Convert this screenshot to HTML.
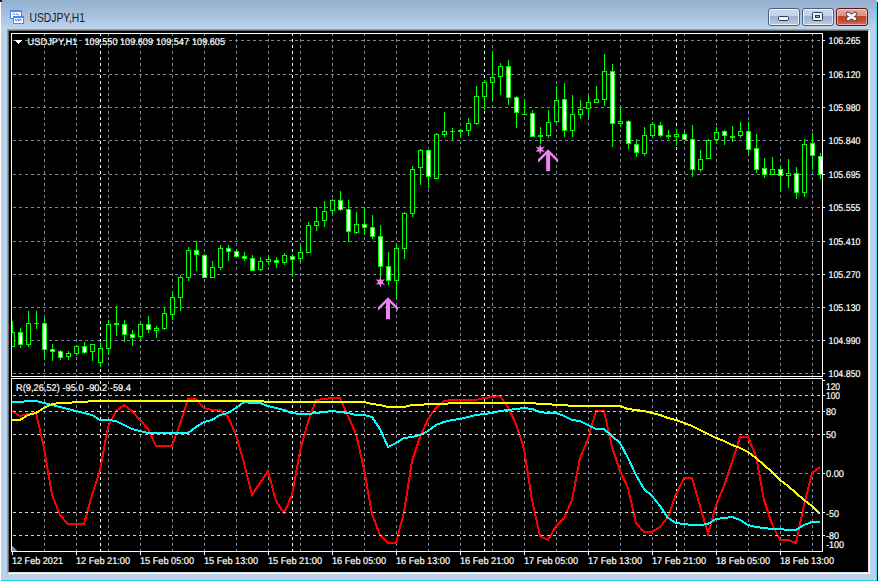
<!DOCTYPE html>
<html><head><meta charset="utf-8"><title>USDJPY,H1</title>
<style>
html,body{margin:0;padding:0;}
body{width:880px;height:581px;overflow:hidden;position:relative;background:#ffffff;font-family:"Liberation Sans", sans-serif;}
.win{position:absolute;left:0;top:0;width:880px;height:581px;}
.frame{position:absolute;left:1px;top:0;width:876px;height:581px;background:#bcd2ea;border-radius:0 2px 0 0;}
.title{position:absolute;left:1px;top:0;width:876px;height:29px;border-radius:0 2px 0 0;
  background:linear-gradient(to bottom,#95afcf 0%,#a4bedc 45%,#bdd4ec 100%);}
.edgeR{position:absolute;left:876px;top:2px;width:1px;height:579px;background:#4fd3fb;}
.edgeR2{position:absolute;left:877px;top:2px;width:1px;height:579px;background:#1c1010;}
.edgeB{position:absolute;left:1px;top:580px;width:876px;height:1px;background:#2cd0ec;}
.edgeL{position:absolute;left:0;top:2px;width:1px;height:579px;background:#ffffff;}
.tl{position:absolute;left:0;top:0;width:2px;height:2px;background:#202020;}
.ttext{position:absolute;left:0;top:0;}
.btn{position:absolute;top:8px;height:16px;width:30px;border:1px solid #4d5e78;border-radius:3px;
  box-shadow:inset 0 0 0 1px rgba(255,255,255,0.75);
  background:linear-gradient(to bottom,#c8d9ec 0%,#bfd2e8 42%,#9cb4d0 47%,#a8bfdb 75%,#bcd1ea 100%);}
.btn.close{border-color:#5a1820;box-shadow:inset 0 0 0 1px rgba(255,220,210,0.6);
  background:linear-gradient(to bottom,#eaa99b 0%,#de9080 42%,#c0432a 47%,#c44c35 75%,#d67060 100%);}
.chart{position:absolute;left:7px;top:29px;width:863px;height:545px;box-sizing:border-box;
  border-style:solid;border-width:1px;border-color:#a0a0a0 #ffffff #ffffff #a0a0a0;}
.chart2{position:absolute;left:0;top:0;right:0;bottom:0;border-style:solid;border-width:1px;
  border-color:#696969 #e3e3e3 #e3e3e3 #696969;background:#000;}
svg{position:absolute;left:0;top:0;}
</style></head>
<body>
<div class="win">
  <div class="frame"></div>
  <div class="title"></div>
  <div class="edgeL"></div>
  <div class="tl"></div>
  <div class="edgeR"></div>
  <div class="edgeR2"></div>
  <div class="edgeB"></div>
  <div class="btn" style="left:768px;"></div>
  <div class="btn" style="left:802px;"></div>
  <div class="btn close" style="left:836px;"></div>
  <div class="chart"><div class="chart2"></div></div>
</div>
<svg width="880" height="581" viewBox="0 0 880 581" shape-rendering="crispEdges">
<defs>
<clipPath id="mainclip"><rect x="12" y="34" width="810" height="342"/></clipPath>
<clipPath id="indclip"><rect x="12" y="379" width="810" height="172"/></clipPath>
</defs>
<!-- title icon -->
<g shape-rendering="auto">
<rect x="10.5" y="10.5" width="11" height="8" fill="#ffffff" stroke="#4a88f4" stroke-width="1"/>
<rect x="10" y="10" width="12" height="2" fill="#4a88f4"/>
<path d="M12.5,14.5 l1.2,-1.2 l1.2,1.5 M15.8,12.8 l1.2,1.5 l1.8,0.8" fill="none" stroke="#3d7de8" stroke-width="1"/>
<rect x="13.5" y="16.5" width="10" height="7" fill="#ffffff" stroke="#4a88f4" stroke-width="1"/>
<rect x="13" y="16" width="11" height="2" fill="#4a88f4"/>
<path d="M15,18.8 l1.4,2.3 l1.3,-2.3 l1.3,2.3 l1.3,-2.3 l1.4,2.3" fill="none" stroke="#3d7de8" stroke-width="1"/>
</g>
<text x="29.5" y="22" font-family='"Liberation Sans", sans-serif' font-size="12px" fill="#1a1a2a" textLength="55.5" lengthAdjust="spacingAndGlyphs" shape-rendering="auto">USDJPY,H1</text>
<!-- window button glyphs -->
<g shape-rendering="auto">
<rect x="778.5" y="16.5" width="10" height="4" rx="1.2" fill="#f2f2f2" stroke="#333a4a" stroke-width="1"/>
<rect x="812.5" y="12.5" width="10" height="8" rx="1" fill="#f2f2f2" stroke="#333a4a" stroke-width="1"/>
<rect x="815.5" y="15.5" width="4" height="2" fill="#8aa6c8" stroke="#333a4a" stroke-width="1"/>
<path d="M848,14 L855,19 M855,14 L848,19" stroke="#3a3440" stroke-width="4.6" stroke-linecap="round"/>
<path d="M848,14 L855,19 M855,14 L848,19" stroke="#f6f6f6" stroke-width="2.8" stroke-linecap="round"/>
</g>
<g stroke="#778899" stroke-width="1" stroke-dasharray="3 3"><line x1="12" y1="40.5" x2="822" y2="40.5" stroke-dashoffset="5"/><line x1="12" y1="74.5" x2="822" y2="74.5" stroke-dashoffset="5"/><line x1="12" y1="107.5" x2="822" y2="107.5" stroke-dashoffset="5"/><line x1="12" y1="140.5" x2="822" y2="140.5" stroke-dashoffset="5"/><line x1="12" y1="174.5" x2="822" y2="174.5" stroke-dashoffset="5"/><line x1="12" y1="207.5" x2="822" y2="207.5" stroke-dashoffset="5"/><line x1="12" y1="241.5" x2="822" y2="241.5" stroke-dashoffset="5"/><line x1="12" y1="274.5" x2="822" y2="274.5" stroke-dashoffset="5"/><line x1="12" y1="307.5" x2="822" y2="307.5" stroke-dashoffset="5"/><line x1="12" y1="340.5" x2="822" y2="340.5" stroke-dashoffset="5"/><line x1="12" y1="373.5" x2="822" y2="373.5" stroke-dashoffset="5"/><line x1="12" y1="473.5" x2="822" y2="473.5" stroke-dashoffset="5"/><line x1="44.5" y1="34" x2="44.5" y2="551" stroke-dashoffset="1"/><line x1="76.5" y1="34" x2="76.5" y2="551" stroke-dashoffset="1"/><line x1="108.5" y1="34" x2="108.5" y2="551" stroke-dashoffset="1"/><line x1="140.5" y1="34" x2="140.5" y2="551" stroke-dashoffset="1"/><line x1="172.5" y1="34" x2="172.5" y2="551" stroke-dashoffset="1"/><line x1="204.5" y1="34" x2="204.5" y2="551" stroke-dashoffset="1"/><line x1="236.5" y1="34" x2="236.5" y2="551" stroke-dashoffset="1"/><line x1="268.5" y1="34" x2="268.5" y2="551" stroke-dashoffset="1"/><line x1="300.5" y1="34" x2="300.5" y2="551" stroke-dashoffset="1"/><line x1="332.5" y1="34" x2="332.5" y2="551" stroke-dashoffset="1"/><line x1="364.5" y1="34" x2="364.5" y2="551" stroke-dashoffset="1"/><line x1="396.5" y1="34" x2="396.5" y2="551" stroke-dashoffset="1"/><line x1="428.5" y1="34" x2="428.5" y2="551" stroke-dashoffset="1"/><line x1="460.5" y1="34" x2="460.5" y2="551" stroke-dashoffset="1"/><line x1="492.5" y1="34" x2="492.5" y2="551" stroke-dashoffset="1"/><line x1="524.5" y1="34" x2="524.5" y2="551" stroke-dashoffset="1"/><line x1="556.5" y1="34" x2="556.5" y2="551" stroke-dashoffset="1"/><line x1="588.5" y1="34" x2="588.5" y2="551" stroke-dashoffset="1"/><line x1="620.5" y1="34" x2="620.5" y2="551" stroke-dashoffset="1"/><line x1="652.5" y1="34" x2="652.5" y2="551" stroke-dashoffset="1"/><line x1="684.5" y1="34" x2="684.5" y2="551" stroke-dashoffset="1"/><line x1="716.5" y1="34" x2="716.5" y2="551" stroke-dashoffset="1"/><line x1="748.5" y1="34" x2="748.5" y2="551" stroke-dashoffset="1"/><line x1="780.5" y1="34" x2="780.5" y2="551" stroke-dashoffset="1"/><line x1="812.5" y1="34" x2="812.5" y2="551" stroke-dashoffset="1"/></g><g stroke="#ffffff" stroke-width="1" stroke-dasharray="3 3"><line x1="100.5" y1="34" x2="100.5" y2="551" stroke-dashoffset="1"/><line x1="292.5" y1="34" x2="292.5" y2="551" stroke-dashoffset="1"/><line x1="484.5" y1="34" x2="484.5" y2="551" stroke-dashoffset="1"/><line x1="676.5" y1="34" x2="676.5" y2="551" stroke-dashoffset="1"/></g><g clip-path="url(#mainclip)"><g fill="#00ff00"><rect x="12" y="321" width="1" height="26"/><rect x="10" y="332" width="5" height="15"/><rect x="20" y="328" width="1" height="20"/><rect x="18" y="332" width="5" height="13"/><rect x="28" y="311" width="1" height="36"/><rect x="26" y="323" width="5" height="22"/><rect x="36" y="311" width="1" height="18"/><rect x="34" y="323" width="5" height="1"/><rect x="44" y="318" width="1" height="42"/><rect x="42" y="323" width="5" height="27"/><rect x="52" y="344" width="1" height="17"/><rect x="50" y="349" width="5" height="3"/><rect x="60" y="350" width="1" height="10"/><rect x="58" y="351" width="5" height="7"/><rect x="68" y="351" width="1" height="9"/><rect x="66" y="353" width="5" height="4"/><rect x="76" y="345" width="1" height="11"/><rect x="74" y="346" width="5" height="8"/><rect x="84" y="342" width="1" height="12"/><rect x="82" y="346" width="5" height="7"/><rect x="92" y="344" width="1" height="17"/><rect x="90" y="344" width="5" height="8"/><rect x="100" y="343" width="1" height="24"/><rect x="98" y="348" width="5" height="15"/><rect x="108" y="320" width="1" height="35"/><rect x="106" y="324" width="5" height="25"/><rect x="116" y="306" width="1" height="30"/><rect x="114" y="323" width="5" height="2"/><rect x="124" y="320" width="1" height="22"/><rect x="122" y="324" width="5" height="11"/><rect x="132" y="330" width="1" height="16"/><rect x="130" y="334" width="5" height="4"/><rect x="140" y="324" width="1" height="15"/><rect x="138" y="324" width="5" height="13"/><rect x="148" y="316" width="1" height="17"/><rect x="146" y="324" width="5" height="6"/><rect x="156" y="326" width="1" height="12"/><rect x="154" y="328" width="5" height="3"/><rect x="164" y="308" width="1" height="22"/><rect x="162" y="313" width="5" height="16"/><rect x="172" y="291" width="1" height="29"/><rect x="170" y="297" width="5" height="18"/><rect x="180" y="275" width="1" height="36"/><rect x="178" y="277" width="5" height="21"/><rect x="188" y="247" width="1" height="34"/><rect x="186" y="250" width="5" height="28"/><rect x="196" y="241" width="1" height="30"/><rect x="194" y="250" width="5" height="5"/><rect x="204" y="254" width="1" height="24"/><rect x="202" y="255" width="5" height="23"/><rect x="212" y="261" width="1" height="17"/><rect x="210" y="267" width="5" height="11"/><rect x="220" y="245" width="1" height="25"/><rect x="218" y="248" width="5" height="20"/><rect x="228" y="245" width="1" height="16"/><rect x="226" y="248" width="5" height="4"/><rect x="236" y="249" width="1" height="9"/><rect x="234" y="251" width="5" height="6"/><rect x="244" y="252" width="1" height="9"/><rect x="242" y="256" width="5" height="3"/><rect x="252" y="255" width="1" height="16"/><rect x="250" y="258" width="5" height="13"/><rect x="260" y="257" width="1" height="14"/><rect x="258" y="261" width="5" height="9"/><rect x="268" y="256" width="1" height="9"/><rect x="266" y="259" width="5" height="3"/><rect x="276" y="257" width="1" height="11"/><rect x="274" y="260" width="5" height="3"/><rect x="284" y="253" width="1" height="12"/><rect x="282" y="255" width="5" height="8"/><rect x="292" y="254" width="1" height="23"/><rect x="290" y="256" width="5" height="4"/><rect x="300" y="246" width="1" height="16"/><rect x="298" y="252" width="5" height="7"/><rect x="308" y="222" width="1" height="31"/><rect x="306" y="225" width="5" height="28"/><rect x="316" y="207" width="1" height="24"/><rect x="314" y="221" width="5" height="5"/><rect x="324" y="201" width="1" height="26"/><rect x="322" y="211" width="5" height="10"/><rect x="332" y="199" width="1" height="15"/><rect x="330" y="200" width="5" height="11"/><rect x="340" y="191" width="1" height="20"/><rect x="338" y="200" width="5" height="10"/><rect x="348" y="200" width="1" height="42"/><rect x="346" y="209" width="5" height="23"/><rect x="356" y="212" width="1" height="22"/><rect x="354" y="224" width="5" height="9"/><rect x="364" y="207" width="1" height="28"/><rect x="362" y="224" width="5" height="4"/><rect x="372" y="215" width="1" height="24"/><rect x="370" y="227" width="5" height="10"/><rect x="380" y="225" width="1" height="53"/><rect x="378" y="236" width="5" height="31"/><rect x="388" y="252" width="1" height="33"/><rect x="386" y="266" width="5" height="15"/><rect x="396" y="244" width="1" height="54"/><rect x="394" y="248" width="5" height="33"/><rect x="404" y="212" width="1" height="47"/><rect x="402" y="213" width="5" height="36"/><rect x="412" y="166" width="1" height="51"/><rect x="410" y="169" width="5" height="45"/><rect x="420" y="149" width="1" height="36"/><rect x="418" y="150" width="5" height="18"/><rect x="428" y="150" width="1" height="38"/><rect x="426" y="150" width="5" height="27"/><rect x="436" y="133" width="1" height="46"/><rect x="434" y="134" width="5" height="45"/><rect x="444" y="112" width="1" height="25"/><rect x="442" y="131" width="5" height="4"/><rect x="452" y="128" width="1" height="12"/><rect x="450" y="131" width="5" height="1"/><rect x="460" y="129" width="1" height="9"/><rect x="458" y="130" width="5" height="2"/><rect x="468" y="118" width="1" height="18"/><rect x="466" y="123" width="5" height="8"/><rect x="476" y="86" width="1" height="39"/><rect x="474" y="96" width="5" height="28"/><rect x="484" y="80" width="1" height="30"/><rect x="482" y="82" width="5" height="15"/><rect x="492" y="51" width="1" height="50"/><rect x="490" y="77" width="5" height="6"/><rect x="500" y="63" width="1" height="32"/><rect x="498" y="66" width="5" height="11"/><rect x="508" y="60" width="1" height="45"/><rect x="506" y="66" width="5" height="32"/><rect x="516" y="96" width="1" height="32"/><rect x="514" y="97" width="5" height="16"/><rect x="524" y="99" width="1" height="16"/><rect x="522" y="114" width="5" height="1"/><rect x="532" y="110" width="1" height="27"/><rect x="530" y="113" width="5" height="24"/><rect x="540" y="127" width="1" height="17"/><rect x="538" y="135" width="5" height="2"/><rect x="548" y="110" width="1" height="28"/><rect x="546" y="122" width="5" height="14"/><rect x="556" y="86" width="1" height="37"/><rect x="554" y="100" width="5" height="22"/><rect x="564" y="83" width="1" height="54"/><rect x="562" y="99" width="5" height="32"/><rect x="572" y="95" width="1" height="42"/><rect x="570" y="114" width="5" height="17"/><rect x="580" y="100" width="1" height="19"/><rect x="578" y="109" width="5" height="6"/><rect x="588" y="96" width="1" height="22"/><rect x="586" y="102" width="5" height="7"/><rect x="596" y="86" width="1" height="17"/><rect x="594" y="99" width="5" height="4"/><rect x="604" y="54" width="1" height="52"/><rect x="602" y="71" width="5" height="29"/><rect x="612" y="64" width="1" height="83"/><rect x="610" y="71" width="5" height="53"/><rect x="620" y="108" width="1" height="19"/><rect x="618" y="121" width="5" height="3"/><rect x="628" y="120" width="1" height="29"/><rect x="626" y="121" width="5" height="23"/><rect x="636" y="139" width="1" height="18"/><rect x="634" y="144" width="5" height="9"/><rect x="644" y="127" width="1" height="29"/><rect x="642" y="135" width="5" height="19"/><rect x="652" y="122" width="1" height="16"/><rect x="650" y="124" width="5" height="12"/><rect x="660" y="122" width="1" height="15"/><rect x="658" y="125" width="5" height="11"/><rect x="668" y="130" width="1" height="9"/><rect x="666" y="135" width="5" height="2"/><rect x="676" y="129" width="1" height="17"/><rect x="674" y="134" width="5" height="3"/><rect x="684" y="131" width="1" height="9"/><rect x="682" y="134" width="5" height="6"/><rect x="692" y="125" width="1" height="52"/><rect x="690" y="139" width="5" height="31"/><rect x="700" y="150" width="1" height="22"/><rect x="698" y="159" width="5" height="11"/><rect x="708" y="139" width="1" height="20"/><rect x="706" y="140" width="5" height="19"/><rect x="716" y="127" width="1" height="17"/><rect x="714" y="132" width="5" height="8"/><rect x="724" y="130" width="1" height="15"/><rect x="722" y="131" width="5" height="5"/><rect x="732" y="126" width="1" height="16"/><rect x="730" y="136" width="5" height="2"/><rect x="740" y="122" width="1" height="16"/><rect x="738" y="131" width="5" height="5"/><rect x="748" y="122" width="1" height="31"/><rect x="746" y="131" width="5" height="19"/><rect x="756" y="134" width="1" height="39"/><rect x="754" y="148" width="5" height="22"/><rect x="764" y="158" width="1" height="20"/><rect x="762" y="168" width="5" height="7"/><rect x="772" y="157" width="1" height="18"/><rect x="770" y="169" width="5" height="6"/><rect x="780" y="166" width="1" height="26"/><rect x="778" y="169" width="5" height="7"/><rect x="788" y="159" width="1" height="29"/><rect x="786" y="173" width="5" height="3"/><rect x="796" y="167" width="1" height="32"/><rect x="794" y="173" width="5" height="20"/><rect x="804" y="139" width="1" height="58"/><rect x="802" y="144" width="5" height="49"/><rect x="812" y="133" width="1" height="37"/><rect x="810" y="143" width="5" height="13"/><rect x="820" y="153" width="1" height="26"/><rect x="818" y="156" width="5" height="19"/></g><g fill="#ffffff"><rect x="19" y="333" width="3" height="11"/><rect x="43" y="324" width="3" height="25"/><rect x="51" y="350" width="3" height="1"/><rect x="59" y="352" width="3" height="5"/><rect x="83" y="347" width="3" height="5"/><rect x="123" y="325" width="3" height="9"/><rect x="131" y="335" width="3" height="2"/><rect x="147" y="325" width="3" height="4"/><rect x="195" y="251" width="3" height="3"/><rect x="203" y="256" width="3" height="21"/><rect x="227" y="249" width="3" height="2"/><rect x="235" y="252" width="3" height="4"/><rect x="243" y="257" width="3" height="1"/><rect x="251" y="259" width="3" height="11"/><rect x="275" y="261" width="3" height="1"/><rect x="291" y="257" width="3" height="2"/><rect x="339" y="201" width="3" height="8"/><rect x="347" y="210" width="3" height="21"/><rect x="363" y="225" width="3" height="2"/><rect x="371" y="228" width="3" height="8"/><rect x="379" y="237" width="3" height="29"/><rect x="387" y="267" width="3" height="13"/><rect x="427" y="151" width="3" height="25"/><rect x="507" y="67" width="3" height="30"/><rect x="515" y="98" width="3" height="14"/><rect x="531" y="114" width="3" height="22"/><rect x="563" y="100" width="3" height="30"/><rect x="611" y="72" width="3" height="51"/><rect x="627" y="122" width="3" height="21"/><rect x="635" y="145" width="3" height="7"/><rect x="659" y="126" width="3" height="9"/><rect x="683" y="135" width="3" height="4"/><rect x="691" y="140" width="3" height="29"/><rect x="723" y="132" width="3" height="3"/><rect x="747" y="132" width="3" height="17"/><rect x="755" y="149" width="3" height="20"/><rect x="763" y="169" width="3" height="5"/><rect x="779" y="170" width="3" height="5"/><rect x="795" y="174" width="3" height="18"/><rect x="811" y="144" width="3" height="11"/><rect x="819" y="157" width="3" height="17"/></g><g fill="#000000"><rect x="11" y="333" width="3" height="13"/><rect x="27" y="324" width="3" height="20"/><rect x="67" y="354" width="3" height="2"/><rect x="75" y="347" width="3" height="6"/><rect x="91" y="345" width="3" height="6"/><rect x="99" y="349" width="3" height="13"/><rect x="107" y="325" width="3" height="23"/><rect x="139" y="325" width="3" height="11"/><rect x="155" y="329" width="3" height="1"/><rect x="163" y="314" width="3" height="14"/><rect x="171" y="298" width="3" height="16"/><rect x="179" y="278" width="3" height="19"/><rect x="187" y="251" width="3" height="26"/><rect x="211" y="268" width="3" height="9"/><rect x="219" y="249" width="3" height="18"/><rect x="259" y="262" width="3" height="7"/><rect x="267" y="260" width="3" height="1"/><rect x="283" y="256" width="3" height="6"/><rect x="299" y="253" width="3" height="5"/><rect x="307" y="226" width="3" height="26"/><rect x="315" y="222" width="3" height="3"/><rect x="323" y="212" width="3" height="8"/><rect x="331" y="201" width="3" height="9"/><rect x="355" y="225" width="3" height="7"/><rect x="395" y="249" width="3" height="31"/><rect x="403" y="214" width="3" height="34"/><rect x="411" y="170" width="3" height="43"/><rect x="419" y="151" width="3" height="16"/><rect x="435" y="135" width="3" height="43"/><rect x="443" y="132" width="3" height="2"/><rect x="467" y="124" width="3" height="6"/><rect x="475" y="97" width="3" height="26"/><rect x="483" y="83" width="3" height="13"/><rect x="491" y="78" width="3" height="4"/><rect x="499" y="67" width="3" height="9"/><rect x="547" y="123" width="3" height="12"/><rect x="555" y="101" width="3" height="20"/><rect x="571" y="115" width="3" height="15"/><rect x="579" y="110" width="3" height="4"/><rect x="587" y="103" width="3" height="5"/><rect x="595" y="100" width="3" height="2"/><rect x="603" y="72" width="3" height="27"/><rect x="619" y="122" width="3" height="1"/><rect x="643" y="136" width="3" height="17"/><rect x="651" y="125" width="3" height="10"/><rect x="675" y="135" width="3" height="1"/><rect x="699" y="160" width="3" height="9"/><rect x="707" y="141" width="3" height="17"/><rect x="715" y="133" width="3" height="6"/><rect x="739" y="132" width="3" height="3"/><rect x="771" y="170" width="3" height="4"/><rect x="787" y="174" width="3" height="1"/><rect x="803" y="145" width="3" height="47"/></g></g><polygon points="380.30,276.60 381.40,280.09 384.98,279.30 382.50,282.00 384.98,284.70 381.40,283.91 380.30,287.40 379.20,283.91 375.62,284.70 378.10,282.00 375.62,279.30 379.20,280.09" fill="#ee82ee" shape-rendering="auto"/><polygon points="388.00,297.30 398.00,307.30 398.00,310.80 390.00,302.80 390.00,319.30 386.00,319.30 386.00,302.80 378.00,310.80 378.00,307.30" fill="#ee82ee" shape-rendering="auto"/><polygon points="540.20,143.90 541.30,147.39 544.88,146.60 542.40,149.30 544.88,152.00 541.30,151.21 540.20,154.70 539.10,151.21 535.52,152.00 538.00,149.30 535.52,146.60 539.10,147.39" fill="#ee82ee" shape-rendering="auto"/><polygon points="548.10,149.20 558.10,159.20 558.10,162.70 550.10,154.70 550.10,171.20 546.10,171.20 546.10,154.70 538.10,162.70 538.10,159.20" fill="#ee82ee" shape-rendering="auto"/><g clip-path="url(#indclip)"><polyline points="12,411 20,416 28,414 36,413 44,448 52,495 60,515 68,524 76,524 84,524 92,495 100,470 108,427 116,411 124,405 132,411 140,420 148,429 156,446 164,446 172,446 180,424 188,399 196,399 204,408 212,410 220,410 228,417 236,435 244,463 252,495 260,483 268,471 276,501 284,513 292,495 300,451 308,422 316,400 324,399 332,398 340,398 348,416 356,434 364,469 372,514 380,535 388,543 396,543 404,512 412,461 420,437 428,419 436,408 444,401 452,400 460,400 468,400 476,400 484,398 492,397 500,396 508,407 516,424 524,449 532,500 540,536 548,540 556,526 564,518 572,500 580,458 588,439 596,411 604,411 612,447 620,471 628,488 636,523 644,532 652,532 660,527 668,517 676,494 684,478 692,478 700,506 708,534 716,505 724,486 732,462 740,437 748,437 756,456 764,500 772,524 780,540 788,540 796,543 804,505 812,473 820,467" fill="none" stroke="#ff0000" stroke-width="2" stroke-linejoin="miter"/><polyline points="12,402 20,402 28,401 36,401 44,403 52,405 60,407 68,409 76,411 84,413 92,415 100,420 108,420 116,421 124,425 132,429 140,431 148,433 156,433 164,433 172,433 180,433 188,433 196,427 204,422 212,420 220,415 228,413 236,408 244,402 252,403 260,403 268,406 276,408 284,410 292,413 300,414 308,414 316,413 324,412 332,411 340,412 348,413 356,415 364,415 372,417 380,429 388,447 396,443 404,438 412,437 420,435 428,431 436,425 444,422 452,420 460,419 468,417 476,415 484,414 492,413 500,411 508,410 516,409 524,408 532,409 540,412 548,413 556,413 564,416 572,420 580,421 588,425 596,429 604,429 612,436 620,443 628,458 636,475 644,489 652,496 660,506 668,518 676,523 684,524 692,525 700,525 708,524 716,519 724,518 732,517 740,520 748,525 756,527 764,528 772,529 780,529 788,530 796,530 804,525 812,522 820,522" fill="none" stroke="#00ffff" stroke-width="2" stroke-linejoin="miter"/><polyline points="12,420 20,420 28,415 36,413 44,408 52,404 60,403 68,403 76,402 84,402 92,401 100,401 108,401 116,401 124,401 132,401 140,401 148,401 156,401 164,401 172,401 180,401 188,401 196,401 204,401 212,401 220,401 228,401 236,401 244,401 252,401 260,401 268,402 276,402 284,402 292,402 300,402 308,402 316,402 324,402 332,402 340,402 348,402 356,402 364,402 372,404 380,405 388,407 396,407 404,407 412,405 420,405 428,404 436,404 444,404 452,403 460,403 468,403 476,403 484,403 492,403 500,403 508,403 516,403 524,403 532,403 540,404 548,404 556,405 564,405 572,406 580,406 588,406 596,406 604,406 612,406 620,406 628,409 636,410 644,411 652,413 660,415 668,418 676,420 684,423 692,426 700,430 708,434 716,438 724,441 732,445 740,448 748,452 756,458 764,465 772,472 780,480 788,486 796,493 804,500 812,506 820,514" fill="none" stroke="#ffff00" stroke-width="2" stroke-linejoin="miter"/><g stroke="#d4d4d4" stroke-width="1" stroke-dasharray="3 3"><line x1="12" y1="395.5" x2="822" y2="395.5" stroke-dashoffset="5"/><line x1="12" y1="411.5" x2="822" y2="411.5" stroke-dashoffset="5"/><line x1="12" y1="434.5" x2="822" y2="434.5" stroke-dashoffset="5"/><line x1="12" y1="512.5" x2="822" y2="512.5" stroke-dashoffset="5"/><line x1="12" y1="535.5" x2="822" y2="535.5" stroke-dashoffset="5"/></g><polygon points="12,546 12,551 17.5,551" fill="#7a8ea6"/></g><rect x="11.5" y="33.5" width="811" height="343" fill="none" stroke="#fff" stroke-width="1"/><rect x="11.5" y="378.5" width="811" height="173" fill="none" stroke="#fff" stroke-width="1"/><g fill="#fff"><rect x="823" y="40" width="2" height="1"/><rect x="823" y="74" width="2" height="1"/><rect x="823" y="107" width="2" height="1"/><rect x="823" y="140" width="2" height="1"/><rect x="823" y="174" width="2" height="1"/><rect x="823" y="207" width="2" height="1"/><rect x="823" y="241" width="2" height="1"/><rect x="823" y="274" width="2" height="1"/><rect x="823" y="307" width="2" height="1"/><rect x="823" y="340" width="2" height="1"/><rect x="823" y="373" width="2" height="1"/><rect x="823" y="380" width="2" height="1"/><rect x="823" y="395" width="2" height="1"/><rect x="823" y="411" width="2" height="1"/><rect x="823" y="434" width="2" height="1"/><rect x="823" y="473" width="2" height="1"/><rect x="823" y="512" width="2" height="1"/><rect x="823" y="535" width="2" height="1"/><rect x="12" y="552" width="1" height="3"/><rect x="76" y="552" width="1" height="3"/><rect x="140" y="552" width="1" height="3"/><rect x="204" y="552" width="1" height="3"/><rect x="268" y="552" width="1" height="3"/><rect x="332" y="552" width="1" height="3"/><rect x="396" y="552" width="1" height="3"/><rect x="460" y="552" width="1" height="3"/><rect x="524" y="552" width="1" height="3"/><rect x="588" y="552" width="1" height="3"/><rect x="652" y="552" width="1" height="3"/><rect x="716" y="552" width="1" height="3"/><rect x="780" y="552" width="1" height="3"/></g><polygon points="15,40 22,40 18.5,44" fill="#fff"/><g fill="#fff" font-family='"Liberation Sans", sans-serif' font-size="9.8px" stroke="#fff" stroke-width="0.2" text-rendering="geometricPrecision"><text transform="translate(828.5,44) scale(1,1.0)" textLength="32" lengthAdjust="spacingAndGlyphs">106.265</text><text transform="translate(828.5,78) scale(1,1.0)" textLength="32" lengthAdjust="spacingAndGlyphs">106.120</text><text transform="translate(828.5,111) scale(1,1.0)" textLength="32" lengthAdjust="spacingAndGlyphs">105.980</text><text transform="translate(828.5,144) scale(1,1.0)" textLength="32" lengthAdjust="spacingAndGlyphs">105.840</text><text transform="translate(828.5,178) scale(1,1.0)" textLength="32" lengthAdjust="spacingAndGlyphs">105.695</text><text transform="translate(828.5,211) scale(1,1.0)" textLength="32" lengthAdjust="spacingAndGlyphs">105.555</text><text transform="translate(828.5,245) scale(1,1.0)" textLength="32" lengthAdjust="spacingAndGlyphs">105.410</text><text transform="translate(828.5,278) scale(1,1.0)" textLength="32" lengthAdjust="spacingAndGlyphs">105.270</text><text transform="translate(828.5,311) scale(1,1.0)" textLength="32" lengthAdjust="spacingAndGlyphs">105.130</text><text transform="translate(828.5,344) scale(1,1.0)" textLength="32" lengthAdjust="spacingAndGlyphs">104.990</text><text transform="translate(828.5,377) scale(1,1.0)" textLength="32" lengthAdjust="spacingAndGlyphs">104.850</text><text transform="translate(826,389.5) scale(1,1.0)" textLength="14" lengthAdjust="spacingAndGlyphs">120</text><text transform="translate(826,399) scale(1,1.0)" textLength="14" lengthAdjust="spacingAndGlyphs">100</text><text transform="translate(826,415) scale(1,1.0)" textLength="10" lengthAdjust="spacingAndGlyphs">80</text><text transform="translate(826,438) scale(1,1.0)" textLength="10" lengthAdjust="spacingAndGlyphs">50</text><text transform="translate(826,477) scale(1,1.0)" textLength="18" lengthAdjust="spacingAndGlyphs">0.00</text><text transform="translate(826,516.5) scale(1,1.0)" textLength="13" lengthAdjust="spacingAndGlyphs">-50</text><text transform="translate(826,539) scale(1,1.0)" textLength="13" lengthAdjust="spacingAndGlyphs">-80</text><text transform="translate(826,548) scale(1,1.0)" textLength="18" lengthAdjust="spacingAndGlyphs">-100</text><text transform="translate(12,564) scale(1,1.0)" textLength="51" lengthAdjust="spacingAndGlyphs">12 Feb 2021</text><text transform="translate(76,564) scale(1,1.0)" textLength="54" lengthAdjust="spacingAndGlyphs">12 Feb 21:00</text><text transform="translate(140,564) scale(1,1.0)" textLength="54" lengthAdjust="spacingAndGlyphs">15 Feb 05:00</text><text transform="translate(204,564) scale(1,1.0)" textLength="54" lengthAdjust="spacingAndGlyphs">15 Feb 13:00</text><text transform="translate(268,564) scale(1,1.0)" textLength="54" lengthAdjust="spacingAndGlyphs">15 Feb 21:00</text><text transform="translate(332,564) scale(1,1.0)" textLength="54" lengthAdjust="spacingAndGlyphs">16 Feb 05:00</text><text transform="translate(396,564) scale(1,1.0)" textLength="54" lengthAdjust="spacingAndGlyphs">16 Feb 13:00</text><text transform="translate(460,564) scale(1,1.0)" textLength="54" lengthAdjust="spacingAndGlyphs">16 Feb 21:00</text><text transform="translate(524,564) scale(1,1.0)" textLength="54" lengthAdjust="spacingAndGlyphs">17 Feb 05:00</text><text transform="translate(588,564) scale(1,1.0)" textLength="54" lengthAdjust="spacingAndGlyphs">17 Feb 13:00</text><text transform="translate(652,564) scale(1,1.0)" textLength="54" lengthAdjust="spacingAndGlyphs">17 Feb 21:00</text><text transform="translate(716,564) scale(1,1.0)" textLength="54" lengthAdjust="spacingAndGlyphs">18 Feb 05:00</text><text transform="translate(780,564) scale(1,1.0)" textLength="54" lengthAdjust="spacingAndGlyphs">18 Feb 13:00</text><text transform="translate(27.5,45) scale(1,1.0)" textLength="50" lengthAdjust="spacingAndGlyphs">USDJPY,H1</text><text transform="translate(84.5,45) scale(1,1.0)" textLength="33" lengthAdjust="spacingAndGlyphs">109.550</text><text transform="translate(120,45) scale(1,1.0)" textLength="33" lengthAdjust="spacingAndGlyphs">109.609</text><text transform="translate(156,45) scale(1,1.0)" textLength="33" lengthAdjust="spacingAndGlyphs">109.547</text><text transform="translate(192,45) scale(1,1.0)" textLength="33" lengthAdjust="spacingAndGlyphs">109.605</text><text transform="translate(16,391) scale(1,1.0)" textLength="115" lengthAdjust="spacingAndGlyphs">R(9,26,52) -95.0 -90.2 -59.4</text></g>
</svg>
</body></html>
